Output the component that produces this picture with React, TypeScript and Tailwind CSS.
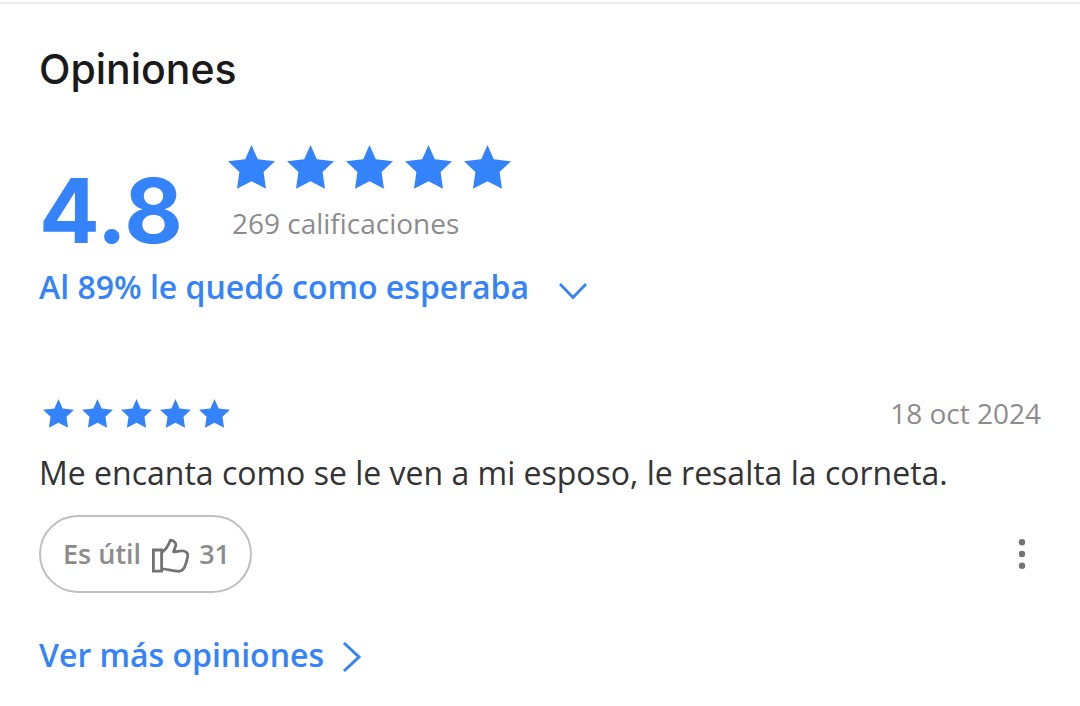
import React from "react";

function Star({ className }: { className: string }) {
  return (
    <svg viewBox="0 0 47 44" className={className} fill="currentColor" aria-hidden="true">
      <path d="M23.5 0 29.8 14.3 47 16.3 35.6 27 38 43.8 23.5 36.2 9 43.8 11.4 27 0 16.3 17.2 14.3Z" />
    </svg>
  );
}

function Stars({ size, className }: { size: string; className: string }) {
  return (
    <div role="img" aria-label="5 de 5 estrellas" className={`flex text-[#3483fa] ${className}`}>
      {[1, 2, 3, 4, 5].map((n) => (
        <Star key={n} className={size} />
      ))}
    </div>
  );
}

function ThumbUp() {
  return (
    <svg viewBox="0 0 38 38" className="h-[38px] w-[38px]" fill="none" stroke="#737373" strokeWidth="2.8" aria-hidden="true">
      <path d="M2.4 15h8.200v21.200H2.400z" />
      <path
        d="M10.600 17.600 C15 14.600 17.200 11 19.400 5.200 C23 5.600 25.600 8 24.600 11 L22.600 16.800 C25.800 16.800 29.200 15.200 32.600 16 C36 16.800 37.200 19.200 36.600 22 C36 25.400 35 29 33.400 32.400 C31.800 35.600 29.600 36.600 26.400 36.200 C21 35.800 16.600 34 10.600 33.800"
        strokeLinejoin="round"
      />
    </svg>
  );
}

export default function App() {
  return (
    <div className="min-h-screen bg-white pt-0.5 font-['Open_Sans',sans-serif] text-[#8c8c8c]">
      <main className="border-t-2 border-[#ebebeb] px-[39px] pt-[41px] pb-8">
        <h1 className="font-['Inter',sans-serif] text-[41px] leading-12 font-medium text-[#1a1a1a]">Opiniones</h1>

        <section className="mt-[52px]">
          <div className="flex items-end gap-[45px]">
            <p className="font-['Inter',sans-serif] text-[90px] leading-[68px] font-bold text-[#3483fa]">4.8</p>
            <div className="pb-1">
              <Stars size="h-11 w-[47px]" className="gap-3" />
              <p className="mt-4 ml-1 text-[28px] leading-9">269 calificaciones</p>
            </div>
          </div>
          <button type="button" className="mt-5 flex items-center gap-[30px] text-[32px] leading-11 font-semibold text-[#3483fa]">
            Al 89% le quedó como esperaba
            <svg viewBox="0 0 28 18" className="mt-2 h-[18px] w-7" fill="none" stroke="currentColor" strokeWidth="2.8" aria-hidden="true">
              <path d="M1 2 14 15.500 27 2" />
            </svg>
          </button>
        </section>

        <article className="mt-[84px]">
          <div className="flex items-center justify-between">
            <Stars size="h-[29px] w-[31px]" className="ml-1 gap-2" />
            <time dateTime="2024-10-18" className="text-[28px] leading-10">18 oct 2024</time>
          </div>
          <p className="mt-4 text-[32px] leading-12 text-[#333333]">
            Me encanta como se le ven a mi esposo, le resalta la corneta.
          </p>
          <div className="mt-[18px] flex items-center justify-between">
            <button type="button" className="flex h-[78px] items-center gap-2.5 rounded-full border-2 border-[#bfbfbf] pr-5 pl-[22px] text-[27px] leading-10 font-semibold">
              Es útil
              <ThumbUp />
              31
            </button>
            <button type="button" aria-label="Más opciones" className="px-[15px] py-2">
              <svg viewBox="0 0 8 32" className="h-8 w-2" fill="#737373" aria-hidden="true">
                <circle cx="4" cy="4.300" r="3.200" />
                <circle cx="4" cy="16" r="3.200" />
                <circle cx="4" cy="27.700" r="3.200" />
              </svg>
            </button>
          </div>
        </article>

        <a href="#opiniones" className="mt-10 inline-flex items-center gap-[18px] text-[32px] leading-11 font-semibold text-[#3483fa]">
          Ver más opiniones
          <svg viewBox="0 0 20 32" className="mt-1 h-8 w-5" fill="none" stroke="currentColor" strokeWidth="3" aria-hidden="true">
            <path d="M2 2 17 16 2 30" />
          </svg>
        </a>
      </main>
    </div>
  );
}
